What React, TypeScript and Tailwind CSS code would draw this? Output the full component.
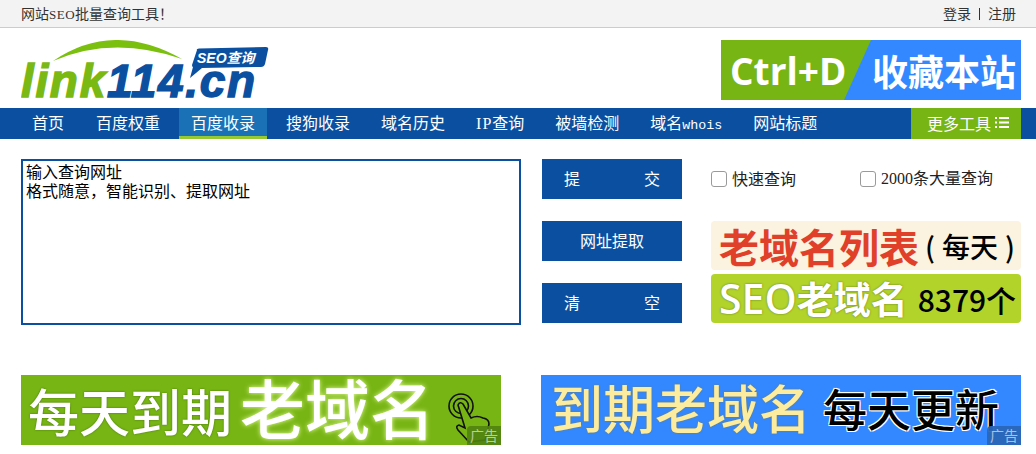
import React from "react";

const cjk = "font-['Noto_Sans_CJK_SC',sans-serif]";
const mono = "font-['Liberation_Mono',monospace] text-[13.33px]";
const serif = "font-['Liberation_Serif',serif]";

function Logo() {
  return (
    <svg width="250" height="60" viewBox="0 0 250 60" className="block">
      <path d="M32 21 Q92 -20 161 19 Q92 -5 32 21 Z" fill="#7cc00f" />
      <path d="M176 10 Q175 9 178 8.500 L245 7 Q248 7 247 10 L244 24 Q243 27 240 27 L181 28 L169 38 L172 27 Q171 27 171 25 Z" fill="#0b50a0" />
      <text x="176" y="23" fontFamily="Liberation Sans" fontWeight="700" fontStyle="italic" fontSize="14" fill="#fff">SEO<tspan fontFamily="Noto Sans CJK SC" fontSize="14">查询</tspan></text>
      <text x="0" y="57" textLength="234" lengthAdjust="spacing" fontFamily="Liberation Sans" fontWeight="700" fontStyle="italic" fontSize="46" fill="#7ab813" stroke="#7ab813" strokeWidth="1.4">link<tspan fill="#0b50a0" stroke="#0b50a0">114.cn</tspan></text>
    </svg>
  );
}

function Nav({ children, active, first }: { children: React.ReactNode; active?: boolean; first?: boolean }) {
  return (
    <a className={`h-[31px] px-3 leading-[29px] text-[16px] text-white whitespace-nowrap ${first ? "mr-2" : "mr-[7px]"} ${active ? "bg-[#1a71b5] border-b-[3px] border-[#96c832]" : ""}`}>
      {children}
    </a>
  );
}

function Btn({ a, b, text }: { a?: string; b?: string; text?: string }) {
  return (
    <button className={`w-[140px] h-10 pb-[2px] bg-[#0b50a0] text-white text-[16px] flex items-center ${text ? "justify-center" : "justify-between px-[22px]"}`}>
      {text ?? (<><span>{a}</span><span>{b}</span></>)}
    </button>
  );
}

function Badge({ tone }: { tone: string }) {
  return (
    <span className={`absolute right-0 bottom-0 w-[34px] h-[19px] rounded-tl-[4px] text-[14px] leading-[19px] text-center text-white/60 ${tone}`}>广告</span>
  );
}

function Hand() {
  return (
    <svg width="46" height="52" viewBox="0 0 46 52" fill="none" stroke="#111" strokeWidth="1.6" className="absolute left-[426px] top-[17px]">
      <circle cx="14" cy="14" r="12" />
      <circle cx="14" cy="14" r="7.5" />
      <path d="M11 13 Q13 9 16 12 L24 26 Q30 23 36 26 Q42 27 42 32 L40 42 L38 48 L22 50 L11 38 Q8 34 12 33 L18 36 Z" fill="#77b514" />
    </svg>
  );
}

export default function App() {
  return (
    <div className={`w-[1036px] h-[454px] bg-white overflow-hidden ${cjk}`}>
      <div className="h-[28px] bg-[#f3f3f3] border-b border-[#cccccc] flex justify-between items-center pl-[21px] pr-[20px] text-[14px] text-[#333]">
        <span>网站<span className={`${serif} text-[13px] tracking-[0.5px]`}>SEO</span>批量查询工具！</span>
        <span className="flex items-center gap-2">
          <span>登录</span>
          <span className="w-px h-3 bg-[#333]" />
          <span>注册</span>
        </span>
      </div>

      <div className="h-[80px] flex items-start justify-between pl-[21px] pr-[15px] pt-3">
        <Logo />
        <div className="relative w-[300px] h-[60px] bg-[#3388ff] overflow-hidden flex items-center">
          <div className="absolute inset-0 bg-[#77b514] [clip-path:polygon(0_0,150px_0,123px_100%,0_100%)]" />
          <span className="relative w-[135px] pl-[9px] font-['Open_Sans',sans-serif] font-bold text-[37px] leading-none text-white whitespace-nowrap">Ctrl+D</span>
          <span className="relative ml-[16px] font-bold text-[36px] leading-none text-white whitespace-nowrap">收藏本站</span>
        </div>
      </div>

      <div className="h-[31px] bg-[#0b50a0] flex pl-[20px] pr-[15px]">
        <Nav first>首页</Nav>
        <Nav>百度权重</Nav>
        <Nav active>百度收录</Nav>
        <Nav>搜狗收录</Nav>
        <Nav>域名历史</Nav>
        <Nav><span className={`${serif} tracking-[1px]`}>IP</span>查询</Nav>
        <Nav>被墙检测</Nav>
        <Nav>域名<span className={mono}>whois</span></Nav>
        <Nav>网站标题</Nav>
        <div className="ml-auto w-[110px] h-[31px] pb-[2px] bg-[#77b514] flex items-center pl-4 gap-[4px] text-[16px] text-white">
          <span>更多工具</span>
          <svg width="14" height="11" viewBox="0 0 14 11" fill="#fff">
            <rect x="0" y="0" width="2" height="2" />
            <rect x="4" y="0" width="10" height="2" />
            <rect x="0" y="4.5" width="2" height="2" />
            <rect x="4" y="4.5" width="10" height="2" />
            <rect x="0" y="9" width="2" height="2" />
            <rect x="4" y="9" width="10" height="2" />
          </svg>
        </div>
      </div>

      <div className="flex pl-[21px] pt-5">
        <textarea
          className="w-[500px] h-[166px] border-2 border-[#0b50a0] pl-[3px] pt-px text-[16px] leading-[19px] text-black resize-none outline-none"
          defaultValue={"输入查询网址\n格式随意，智能识别、提取网址"}
        />
        <div className="ml-[21px] w-[140px] flex flex-col gap-[22px]">
          <Btn a="提" b="交" />
          <Btn text="网址提取" />
          <Btn a="清" b="空" />
        </div>
        <div className="ml-[29px] w-[310px]">
          <div className="h-10 flex items-center text-[16px] text-[#222]">
            <label className="flex items-center w-[149px] gap-[5px]">
              <input type="checkbox" className="appearance-none w-4 h-4 m-0 bg-white border border-[#9a9a9a] rounded-[3px]" />
              <span className="mb-[2px]">快速查询</span>
            </label>
            <label className="flex items-center gap-[5px] whitespace-nowrap">
              <input type="checkbox" className="appearance-none w-4 h-4 m-0 bg-white border border-[#9a9a9a] rounded-[3px]" />
              <span className="mb-[2px]"><span className={serif}>2000</span>条大量查询</span>
            </label>
          </div>
          <div className="mt-[22px] h-[49px] rounded-[4px] bg-[#fbf3df] flex items-center pl-2 text-[#e0402a] font-bold text-[40px] leading-none whitespace-nowrap">
            老域名列表
            <span className="text-black font-medium text-[28px] ml-[6px] flex items-center gap-[7px]"><span>(</span>每天<span>)</span></span>
          </div>
          <div className="mt-1 h-[49px] rounded-[4px] bg-[#b2d32a] flex items-center pl-2 text-white font-bold text-[37px] leading-none whitespace-nowrap [text-shadow:0_0_2px_#55701a]">
            <span className="font-['Open_Sans',sans-serif] font-semibold text-[41px]">SEO</span>老域名
            <span className="text-black font-medium text-[30px] ml-[10px] [text-shadow:none]">8379个</span>
          </div>
        </div>
      </div>

      <div className="flex gap-10 pl-[21px] mt-[50px]">
        <div className="relative w-[480px] h-[70px] bg-[#77b514] overflow-hidden flex items-center pl-[7px] text-white whitespace-nowrap">
          <span className="font-medium text-[51px] leading-none [text-shadow:0_0_2px_#3f6a08]">每天到期</span>
          <span className="ml-[8px] mb-[8px] font-medium text-[65px] leading-none [text-shadow:0_0_5px_#e8ffa0]">老域名</span>
          <Hand />
          <Badge tone="bg-[#4f8210]/90" />
        </div>
        <div className="relative w-[480px] h-[70px] bg-[#3388ff] overflow-hidden flex items-center pl-[10px] whitespace-nowrap">
          <span className="mb-[6px] font-medium text-[52px] leading-none text-[#fbeca0] [text-shadow:0_0_2px_#7a7a50]">到期老域名</span>
          <span className="ml-[12px] mb-[4px] font-medium text-[44px] leading-none text-black [text-shadow:1px_1px_0_#fff,-1px_-1px_0_#fff,1px_-1px_0_#fff,-1px_1px_0_#fff]">每天更新</span>
          <Badge tone="bg-[#2a66b8]/95" />
        </div>
      </div>
    </div>
  );
}
